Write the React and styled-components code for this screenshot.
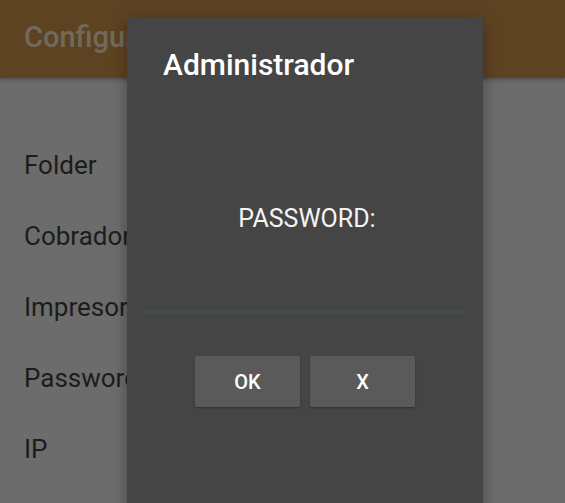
import React from 'react'
import styled, { createGlobalStyle } from 'styled-components'

const GlobalStyle = createGlobalStyle`
	html, body {
		margin: 0;
		padding: 0;
		background: #6c6c6c;
		font-family: Roboto, "Liberation Sans", sans-serif;
		overflow: hidden;
	}
`

const items = ['Folder', 'Cobrador', 'Impresora', 'Password', 'IP']

const App = () => (
	<Screen>
		<GlobalStyle />
		<Toolbar>
			<ToolbarTitle>Configuración</ToolbarTitle>
		</Toolbar>
		<SettingsList>
			{items.map(item => (
				<SettingsItem key={item}>{item}</SettingsItem>
			))}
		</SettingsList>
		<Dialog>
			<DialogTitle>Administrador</DialogTitle>
			<PromptLabel>PASSWORD:</PromptLabel>
			<PasswordInput type="password" />
			<ButtonRow>
				<DialogButton>OK</DialogButton>
				<DialogButton>X</DialogButton>
			</ButtonRow>
		</Dialog>
	</Screen>
)

export default App

const Screen = styled.div`
	position: relative;
	width: 565px;
	height: 503px;
	background: #6c6c6c;
	overflow: hidden;
`

const Toolbar = styled.header`
	height: 78px;
	background: #5e4322;
	display: flex;
	align-items: center;
	padding-left: 24px;
	box-shadow: 0 2px 4px rgba(0, 0, 0, 0.25);
`

const ToolbarTitle = styled.h1`
	margin: 0 0 4px;
	font-size: 29px;
	font-weight: 500;
	color: #716a5c;
`

const SettingsList = styled.ul`
	list-style: none;
	margin: 0;
	padding: 73px 0 0 24px;
	display: flex;
	flex-direction: column;
	gap: 43px;
`

const SettingsItem = styled.li`
	font-size: 26px;
	line-height: 28px;
	color: #1c1c1c;
`

const Dialog = styled.div`
	position: absolute;
	left: 127px;
	top: 17px;
	width: 356px;
	height: 520px;
	background: #454545;
	box-shadow: 0 4px 14px rgba(0, 0, 0, 0.35);
	display: flex;
	flex-direction: column;
	padding: 0 19px 0 17px;
	box-sizing: border-box;
`

const DialogTitle = styled.h2`
	margin: 30px 0 0 19px;
	font-size: 30px;
	font-weight: 500;
	line-height: 36px;
	color: #ffffff;
`

const PromptLabel = styled.div`
	margin-top: 121px;
	padding-left: 6px;
	text-align: center;
	font-size: 25px;
	line-height: 30px;
	color: #f4f4f4;
`

const PasswordInput = styled.input`
	margin-top: 56px;
	width: 100%;
	height: 23px;
	box-sizing: border-box;
	background: transparent;
	border: none;
	border-bottom: 2px solid #3e4e54;
	outline: none;
	padding: 0;
`

const ButtonRow = styled.div`
	margin-top: 43px;
	display: flex;
	justify-content: center;
	gap: 10px;
	padding-left: 2px;
`

const DialogButton = styled.button`
	width: 105px;
	height: 51px;
	border: none;
	border-radius: 2px;
	background: #5a5a5a;
	color: #ffffff;
	font-family: Roboto, "Liberation Sans", sans-serif;
	font-size: 20px;
	font-weight: 500;
	box-shadow: 0 1px 2px rgba(0, 0, 0, 0.3);
`
